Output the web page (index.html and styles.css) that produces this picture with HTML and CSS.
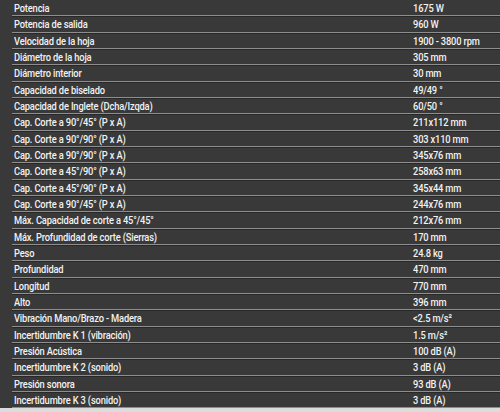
FILE: index.html
```html
<!DOCTYPE html>
<html lang="es">
<head>
<meta charset="utf-8">
<link rel="stylesheet" href="styles.css">
</head>
<body>
<div class="page">
  <div class="specs">
    <div class="row"><span class="k">Potencia</span><span class="v">1675 W</span></div>
    <div class="row"><span class="k">Potencia de salida</span><span class="v">960 W</span></div>
    <div class="row"><span class="k">Velocidad de la hoja</span><span class="v">1900 - 3800 rpm</span></div>
    <div class="row"><span class="k">Diámetro de la hoja</span><span class="v">305 mm</span></div>
    <div class="row"><span class="k">Diámetro interior</span><span class="v">30 mm</span></div>
    <div class="row"><span class="k">Capacidad de biselado</span><span class="v">49/49 °</span></div>
    <div class="row"><span class="k">Capacidad de Inglete (Dcha/Izqda)</span><span class="v">60/50 °</span></div>
    <div class="row"><span class="k">Cap. Corte a 90°/45° (P x A)</span><span class="v">211x112 mm</span></div>
    <div class="row"><span class="k">Cap. Corte a 90°/90° (P x A)</span><span class="v">303 x110 mm</span></div>
    <div class="row"><span class="k">Cap. Corte a 90°/90° (P x A)</span><span class="v">345x76 mm</span></div>
    <div class="row"><span class="k">Cap. Corte a 45°/90° (P x A)</span><span class="v">258x63 mm</span></div>
    <div class="row"><span class="k">Cap. Corte a 45°/90° (P x A)</span><span class="v">345x44 mm</span></div>
    <div class="row"><span class="k">Cap. Corte a 90°/45° (P x A)</span><span class="v">244x76 mm</span></div>
    <div class="row"><span class="k">Máx. Capacidad de corte a 45°/45°</span><span class="v">212x76 mm</span></div>
    <div class="row"><span class="k">Máx. Profundidad de corte (Sierras)</span><span class="v">170 mm</span></div>
    <div class="row"><span class="k">Peso</span><span class="v">24.8 kg</span></div>
    <div class="row"><span class="k">Profundidad</span><span class="v">470 mm</span></div>
    <div class="row"><span class="k">Longitud</span><span class="v">770 mm</span></div>
    <div class="row"><span class="k">Alto</span><span class="v">396 mm</span></div>
    <div class="row"><span class="k">Vibración Mano/Brazo - Madera</span><span class="v">&lt;2.5 m/s²</span></div>
    <div class="row"><span class="k">Incertidumbre K 1 (vibración)</span><span class="v">1.5 m/s²</span></div>
    <div class="row"><span class="k">Presión Acústica</span><span class="v">100 dB (A)</span></div>
    <div class="row"><span class="k">Incertidumbre K 2 (sonido)</span><span class="v">3 dB (A)</span></div>
    <div class="row"><span class="k">Presión sonora</span><span class="v">93 dB (A)</span></div>
    <div class="row"><span class="k">Incertidumbre K 3 (sonido)</span><span class="v">3 dB (A)</span></div>
  </div>
</div>
</body>
</html>
```

FILE: styles.css
```css
html, body {
  margin: 0;
  padding: 0;
  background: #dcdcdc;
}
.page {
  background: #393939;
  padding-left: 12px;
  width: 500px;
  box-sizing: border-box;
}
.specs {
  display: flex;
  flex-direction: column;
  font-family: Roboto, "Liberation Sans", sans-serif;
  font-weight: 500;
  font-size: 11.5px;
  letter-spacing: -0.2px;
  color: #f2f2f2;
}
.row {
  display: grid;
  grid-template-columns: 398.5px 1fr;
  align-items: center;
  height: 16.33px;
  box-sizing: border-box;
  padding-left: 2px;
  border-bottom: 1px solid #8e8e8e;
}
.row + .row {
  border-top: 1px solid #282828;
}
.row:first-child {
  padding-top: 1px;
}
.k, .v {
  display: inline-block;
  white-space: nowrap;
  line-height: 14px;
  transform: scaleX(0.81);
  transform-origin: left center;
}
```
